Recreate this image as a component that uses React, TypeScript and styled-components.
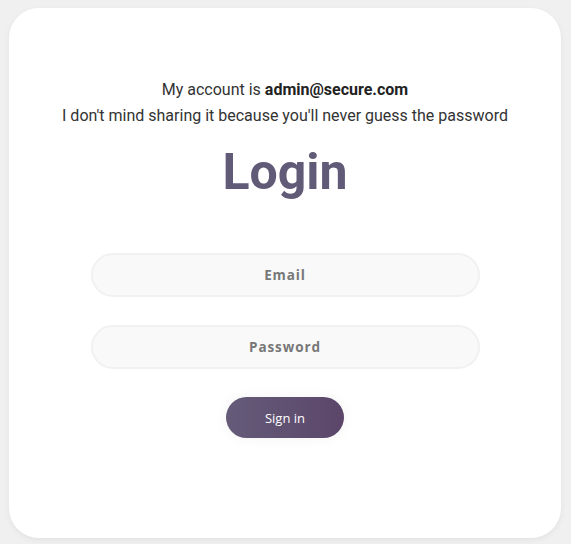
import React from "react";
import styled, { createGlobalStyle } from "styled-components";

const GlobalStyle = createGlobalStyle`
  html, body { margin: 0; padding: 0; background: #f0f0f0; }
  body { font-family: Roboto, "Liberation Sans", sans-serif; }
  * { box-sizing: border-box; }
`;

const Page = styled.div`
  padding: 8px 10px 6px 9px;
`;

const Card = styled.div`
  height: 530px;
  background: #ffffff;
  border-radius: 30px;
  box-shadow: 0 2px 6px rgba(0, 0, 0, 0.06);
  padding-top: 69px;
  display: flex;
  flex-direction: column;
  align-items: center;
`;

const Intro = styled.p`
  margin: 0;
  font-size: 16px;
  line-height: 26px;
  color: #333;
  text-align: center;
  b { font-weight: 700; color: #222; }
`;

const Title = styled.h1`
  margin: 13px 0 0;
  font-family: Roboto, "Liberation Sans", sans-serif;
  font-size: 50px;
  line-height: 60px;
  font-weight: 700;
  color: #625b78;
`;

const Form = styled.form`
  margin-top: 51px;
  width: 389px;
  display: flex;
  flex-direction: column;
  align-items: center;
  gap: 28px;
`;

const Field = styled.input`
  width: 100%;
  height: 44px;
  border: 2px solid #f1f1f1;
  border-radius: 22px;
  background: #f9f9f9;
  outline: none;
  text-align: center;
  font-family: "Open Sans", sans-serif;
  font-size: 13.5px;
  font-weight: 700;
  letter-spacing: 0.9px;
  color: #555;
  &::placeholder { color: #777; opacity: 1; }
`;

const Button = styled.button`
  width: 118px;
  height: 41px;
  border: none;
  border-radius: 21px;
  background: linear-gradient(90deg, #655b79 0%, #5b4669 100%);
  color: #fff;
  font-family: "Open Sans", sans-serif;
  font-size: 13px;
  box-shadow: 0 0 14px rgba(0, 0, 0, 0.05);
  cursor: pointer;
`;

export default function App() {
  return (
    <>
      <GlobalStyle />
      <Page>
        <Card>
          <Intro>
            My account is <b>admin@secure.com</b>
            <br />
            I don't mind sharing it because you'll never guess the password
          </Intro>
          <Title>Login</Title>
          <Form onSubmit={(e) => e.preventDefault()}>
            <Field type="email" placeholder="Email" />
            <Field type="password" placeholder="Password" />
            <Button type="submit">Sign in</Button>
          </Form>
        </Card>
      </Page>
    </>
  );
}
